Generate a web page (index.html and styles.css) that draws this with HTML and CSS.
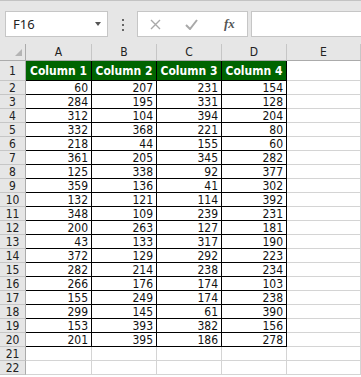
FILE: index.html
```html
<!DOCTYPE html>
<html lang="en">
<head>
    <meta charset="UTF-8">
    <title>Sheet</title>
    <link rel="stylesheet" href="styles.css">
</head>
<body>
    <div class="toolbar">
        <div class="name-box">
            <span>F16</span>
            <span class="caret"></span>
        </div>
        <div class="grip"><i></i><i></i><i></i></div>
        <div class="fx-box">
            <svg class="ico" width="11" height="11" viewBox="0 0 11 11"><path d="M1 1L10 10M10 1L1 10" stroke="#a9a9a9" stroke-width="1.4" fill="none"/></svg>
            <svg class="ico" width="13" height="11" viewBox="0 0 13 11"><path d="M1 6L5 10L12 1" stroke="#a9a9a9" stroke-width="2" fill="none"/></svg>
            <span class="fx">fx</span>
        </div>
        <div class="formula"></div>
    </div>

    <div class="sheet">
        <div class="hd corner"><span class="tri"></span></div>
        <div class="hd">A</div><div class="hd">B</div><div class="hd">C</div><div class="hd">D</div><div class="hd">E</div>

        <div class="rh first">1</div>
        <div class="c th">Column 1</div><div class="c th">Column 2</div><div class="c th">Column 3</div><div class="c th">Column 4</div><div class="e first"></div>

        <div class="rh">2</div><div class="c">60</div><div class="c">207</div><div class="c">231</div><div class="c">154</div><div class="e"></div>
        <div class="rh">3</div><div class="c">284</div><div class="c">195</div><div class="c">331</div><div class="c">128</div><div class="e"></div>
        <div class="rh">4</div><div class="c">312</div><div class="c">104</div><div class="c">394</div><div class="c">204</div><div class="e"></div>
        <div class="rh">5</div><div class="c">332</div><div class="c">368</div><div class="c">221</div><div class="c">80</div><div class="e"></div>
        <div class="rh">6</div><div class="c">218</div><div class="c">44</div><div class="c">155</div><div class="c">60</div><div class="e"></div>
        <div class="rh">7</div><div class="c">361</div><div class="c">205</div><div class="c">345</div><div class="c">282</div><div class="e"></div>
        <div class="rh">8</div><div class="c">125</div><div class="c">338</div><div class="c">92</div><div class="c">377</div><div class="e"></div>
        <div class="rh">9</div><div class="c">359</div><div class="c">136</div><div class="c">41</div><div class="c">302</div><div class="e"></div>
        <div class="rh">10</div><div class="c">132</div><div class="c">121</div><div class="c">114</div><div class="c">392</div><div class="e"></div>
        <div class="rh">11</div><div class="c">348</div><div class="c">109</div><div class="c">239</div><div class="c">231</div><div class="e"></div>
        <div class="rh">12</div><div class="c">200</div><div class="c">263</div><div class="c">127</div><div class="c">181</div><div class="e"></div>
        <div class="rh">13</div><div class="c">43</div><div class="c">133</div><div class="c">317</div><div class="c">190</div><div class="e"></div>
        <div class="rh">14</div><div class="c">372</div><div class="c">129</div><div class="c">292</div><div class="c">223</div><div class="e"></div>
        <div class="rh">15</div><div class="c">282</div><div class="c">214</div><div class="c">238</div><div class="c">234</div><div class="e"></div>
        <div class="rh">16</div><div class="c">266</div><div class="c">176</div><div class="c">174</div><div class="c">103</div><div class="e"></div>
        <div class="rh">17</div><div class="c">155</div><div class="c">249</div><div class="c">174</div><div class="c">238</div><div class="e"></div>
        <div class="rh">18</div><div class="c">299</div><div class="c">145</div><div class="c">61</div><div class="c">390</div><div class="e"></div>
        <div class="rh">19</div><div class="c">153</div><div class="c">393</div><div class="c">382</div><div class="c">156</div><div class="e"></div>
        <div class="rh">20</div><div class="c">201</div><div class="c">395</div><div class="c">186</div><div class="c">278</div><div class="e"></div>

        <div class="rh">21</div><div class="e"></div><div class="e"></div><div class="e"></div><div class="e"></div><div class="e"></div>
        <div class="rh">22</div><div class="e"></div><div class="e"></div><div class="e"></div><div class="e"></div><div class="e"></div>
    </div>
</body>
</html>
```

FILE: styles.css
```css
body {
    margin: 0;
    background: #fff;
    font-family: "DejaVu Sans Condensed", "DejaVu Sans", sans-serif;
    overflow: hidden;
}

/* formula bar */
.toolbar {
    height: 33px;
    padding: 10px 0 0 5px;
    background: #e6e6e6;
    border-top: 1px solid #c3c3c3;
    display: flex;
    align-items: flex-start;
}
.name-box {
    height: 24px;
    width: 88px;
    background: #fff;
    border: 1px solid #c6c6c6;
    display: flex;
    align-items: center;
    justify-content: space-between;
    padding: 0 6px 0 7px;
    font-family: "Noto Sans", sans-serif;
    font-size: 13px;
    color: #222;
}
.caret {
    width: 0;
    height: 0;
    border-left: 3.5px solid transparent;
    border-right: 3.5px solid transparent;
    border-top: 4px solid #555;
}
.grip {
    display: flex;
    flex-direction: column;
    gap: 3px;
    margin: 8px 13px 0 14px;
}
.grip i {
    display: block;
    width: 2px;
    height: 2px;
    background: #666;
}
.fx-box {
    width: 111px;
    height: 26px;
    background: #fff;
    border: 1px solid #c6c6c6;
    display: flex;
    align-items: center;
    padding-left: 12px;
    gap: 24px;
    box-sizing: border-box;
}
.fx-box .ico { flex: none; }
.fx {
    font-family: "Liberation Serif", serif;
    font-style: italic;
    font-weight: bold;
    font-size: 13px;
    color: #555;
    margin-left: 2px;
}
.formula {
    flex: 1;
    height: 24px;
    margin-left: 3px;
    background: #fff;
    border: 1px solid #c6c6c6;
    border-right: none;
}

/* sheet grid */
.sheet {
    display: grid;
    grid-template-columns: 26px 66px 65px 65px 65px 1fr;
    grid-template-rows: 17px 20px;
    grid-auto-rows: 14px;
    font-size: 12px;
}
.sheet > div {
    box-sizing: border-box;
    border-right: 1px solid #d4d4d4;
    border-bottom: 1px solid #d4d4d4;
}
.sheet > .hd {
    background: #e6e6e6;
    border-right-color: #c6c6c6;
    border-bottom-color: #ababab;
    color: #222;
    text-align: center;
    line-height: 16px;
}
.sheet > .corner {
    position: relative;
    border-right-color: #ababab;
}
.tri {
    position: absolute;
    right: 3px;
    bottom: 4px;
    width: 0;
    height: 0;
    border-left: 7px solid transparent;
    border-bottom: 7px solid #b4b4b4;
}
.sheet > .rh {
    background: #e6e6e6;
    border-right-color: #ababab;
    border-bottom-color: #c6c6c6;
    color: #222;
    text-align: center;
    line-height: 14px;
}
.sheet > .rh.first {
    line-height: 20px;
}
.sheet > .c {
    border-right-color: #000;
    border-bottom-color: #000;
    text-align: right;
    padding-right: 3px;
    line-height: 14px;
    color: #111;
}
.sheet > .th {
    background: #006400;
    color: #fff;
    font-weight: bold;
    text-align: center;
    padding: 0;
    line-height: 20px;
}
```
